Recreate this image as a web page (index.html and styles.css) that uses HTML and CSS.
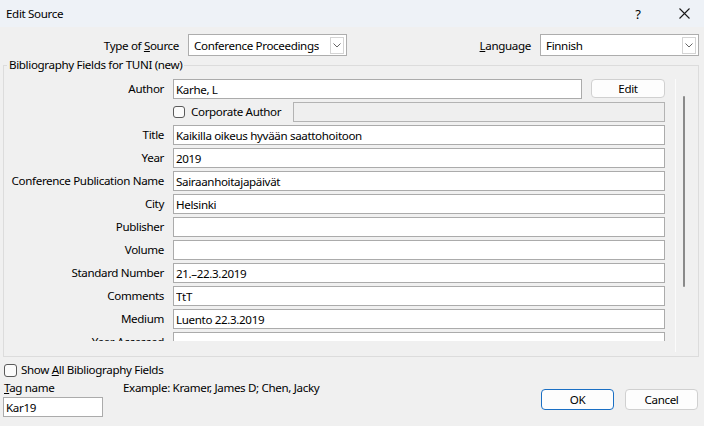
FILE: index.html
```html
<!DOCTYPE html>
<html>
<head>
<meta charset="utf-8">
<link rel="stylesheet" href="styles.css">
</head>
<body>
<div class="dialog">
  <div class="titlebar">
    <span class="title">Edit Source</span>
    <div class="tb-buttons">
      <span class="help">?</span>
      <svg class="close" width="11" height="11" viewBox="0 0 11 11"><path d="M0.5 0.5 L10.5 10.5 M10.5 0.5 L0.5 10.5" stroke="#1a1a1a" stroke-width="1.1" fill="none"/></svg>
    </div>
  </div>

  <div class="toprow">
    <div class="tgroup">
      <span class="tlabel type-label">Type of <u>S</u>ource</span>
      <div class="combo"><span class="combo-text">Conference Proceedings</span><span class="combo-btn"><svg width="8" height="5" viewBox="0 0 8 5"><path d="M0.5 0.5 L4 4 L7.5 0.5" stroke="#666" stroke-width="1" fill="none"/></svg></span></div>
    </div>
    <div class="tgroup">
      <span class="tlabel"><u>L</u>anguage</span>
      <div class="combo"><span class="combo-text">Finnish</span><span class="combo-btn"><svg width="8" height="5" viewBox="0 0 8 5"><path d="M0.5 0.5 L4 4 L7.5 0.5" stroke="#666" stroke-width="1" fill="none"/></svg></span></div>
    </div>
  </div>

  <fieldset class="group">
    <legend>Bibliography Fields for TUNI (new)</legend>
    <div class="group-inner">
      <div class="viewport">
        <div class="fields">
          <span class="flabel">Author</span>
          <div class="author-cell">
            <input class="field" value="Karhe, L">
            <button class="btn edit">Edit</button>
          </div>

          <span></span>
          <div class="corp-cell">
            <label class="chk"><span class="box small"></span><span>Corporate Author</span></label>
            <input class="field disabled" value="" disabled>
          </div>

          <span class="flabel">Title</span>
          <input class="field" value="Kaikilla oikeus hyvään saattohoitoon">

          <span class="flabel">Year</span>
          <input class="field" value="2019">

          <span class="flabel">Conference Publication Name</span>
          <input class="field" value="Sairaanhoitajapäivät">

          <span class="flabel">City</span>
          <input class="field" value="Helsinki">

          <span class="flabel">Publisher</span>
          <input class="field" value="">

          <span class="flabel">Volume</span>
          <input class="field" value="">

          <span class="flabel">Standard Number</span>
          <input class="field" value="21.–22.3.2019">

          <span class="flabel">Comments</span>
          <input class="field" value="TtT">

          <span class="flabel">Medium</span>
          <input class="field" value="Luento 22.3.2019">

          <span class="flabel">Year Accessed</span>
          <input class="field" value="">
        </div>
      </div>
      <div class="scrollbar"><div class="thumb"></div></div>
    </div>
  </fieldset>

  <div class="bottom">
    <div class="bleft">
      <label class="chk showall"><span class="box"></span><span>Show <u>A</u>ll Bibliography Fields</span></label>
      <div class="tagrow">
        <span class="taglabel"><u>T</u>ag name</span>
        <span class="example">Example: Kramer, James D; Chen, Jacky</span>
      </div>
      <input class="field tag" value="Kar19">
    </div>
    <div class="bright">
      <button class="btn ok">OK</button>
      <button class="btn cancel">Cancel</button>
    </div>
  </div>
</div>
</body>
</html>
```

FILE: styles.css
```css
* { box-sizing: border-box; }
html, body {
  margin: 0;
  padding: 0;
  width: 704px;
  height: 426px;
  overflow: hidden;
  background: #f0f0f0;
  font-family: "Noto Sans", "Open Sans", sans-serif;
  font-size: 11.6px;
  letter-spacing: -0.35px;
  color: #000;
}
.dialog {
  width: 704px;
  height: 426px;
  display: flex;
  flex-direction: column;
}
.titlebar {
  height: 27px;
  background: #eef2f7;
  display: flex;
  align-items: center;
  justify-content: space-between;
  padding-left: 6px;
  flex: none;
}
.title { line-height: 16px; }
.tb-buttons {
  display: flex;
  align-items: center;
  height: 100%;
}
.help {
  font-size: 13px;
  width: 30px;
  text-align: center;
}
.close {
  margin-left: 26px;
  margin-right: 14px;
}
.toprow {
  display: flex;
  justify-content: space-between;
  margin-top: 7px;
  height: 22px;
  padding-right: 5px;
  flex: none;
}
.tgroup {
  display: flex;
  align-items: center;
}
.tlabel {
  margin-right: 9px;
  white-space: nowrap;
}
.type-label {
  width: 179px;
  text-align: right;
}
.combo {
  width: 159px;
  height: 22px;
  background: #fff;
  border: 1px solid #adadad;
  display: flex;
  align-items: center;
  justify-content: space-between;
  padding-left: 5px;
  padding-right: 2px;
}
.combo-text {
  white-space: nowrap;
  overflow: hidden;
}
.combo-btn {
  width: 14px;
  height: 17px;
  border: 1px solid #d4d4d4;
  background: #fff;
  display: flex;
  align-items: center;
  justify-content: center;
  flex: none;
}
.group {
  margin: 1px 5px 0 3px;
  padding: 0;
  border: 1px solid #dcdcdc;
  height: 300px;
  min-width: 0;
  flex: none;
}
.group legend {
  padding: 0 2px;
  margin-left: 3px;
  line-height: 16px;
}
.group-inner {
  display: flex;
  height: 279px;
}
.viewport {
  flex: 1;
  height: 268px;
  overflow: hidden;
  padding-top: 6px;
  padding-right: 10px;
}
.fields {
  display: grid;
  grid-template-columns: 160px 1fr;
  column-gap: 9px;
  row-gap: 3px;
  grid-auto-rows: 20px;
  align-items: center;
}
.flabel {
  text-align: right;
  line-height: 16px;
  white-space: nowrap;
}
.field {
  height: 20px;
  width: 100%;
  border: 1px solid #ababab;
  background: #fff;
  font-family: inherit;
  font-size: 11.6px;
  letter-spacing: -0.35px;
  color: #000;
  padding: 0 0 0 2px;
  margin: 0;
  outline: none;
  border-radius: 0;
}
.field.disabled {
  background: #efefef;
  border-color: #b3b3b3;
}
.author-cell {
  display: flex;
  gap: 9px;
  height: 20px;
}
.author-cell .field { flex: 1; }
.btn {
  font-family: inherit;
  font-size: 11.6px;
  letter-spacing: -0.35px;
  color: #000;
  background: #fdfdfd;
  border: 1px solid #d0d0d0;
  border-radius: 4px;
  padding: 0;
  margin: 0;
}
.edit {
  width: 74px;
  height: 19px;
  flex: none;
}
.corp-cell {
  display: flex;
  align-items: center;
  height: 20px;
}
.corp-cell .chk { width: 120px; flex: none; }
.corp-cell .field { flex: 1; }
.chk {
  display: flex;
  align-items: center;
  line-height: 16px;
}
.box {
  width: 13px;
  height: 13px;
  border: 1px solid #5a5a5a;
  border-radius: 3px;
  background: #fbfbfb;
  margin-right: 4px;
  flex: none;
}
.box.small {
  width: 12px;
  height: 12px;
  margin-right: 6px;
}
.scrollbar {
  width: 23px;
  margin-top: 6px;
  height: 273px;
  border-left: 1px solid #fbfbfb;
  flex: none;
  padding-top: 17px;
  padding-left: 7px;
}
.thumb {
  width: 2px;
  height: 191px;
  background: #8a8a8a;
  border-radius: 1px;
}
.bottom {
  display: flex;
  justify-content: space-between;
  padding-left: 3px;
  padding-right: 6px;
  flex: none;
}
.bleft {
  display: flex;
  flex-direction: column;
}
.showall {
  margin-top: 5px;
  margin-left: 1px;
  height: 16px;
}
.tagrow {
  display: flex;
  height: 16px;
  line-height: 16px;
  margin-top: 2px;
  padding-left: 1px;
}
.taglabel { width: 119px; }
.field.tag {
  width: 100px;
  margin-top: 1px;
}
.bright {
  display: flex;
  align-items: flex-end;
  gap: 11px;
  padding-bottom: 7px;
}
.ok, .cancel {
  width: 73px;
  height: 21px;
}
.ok {
  border-color: #1a6fc4;
}
```
